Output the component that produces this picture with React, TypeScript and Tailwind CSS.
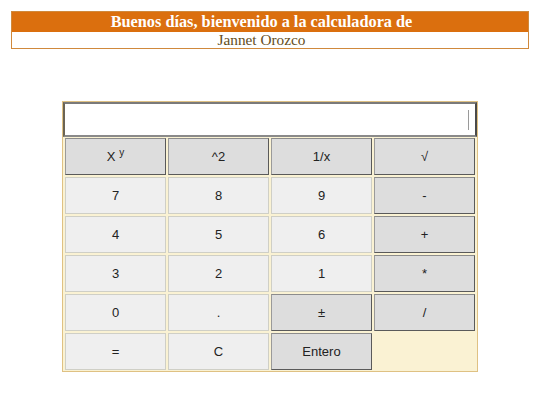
import React, { useState } from "react";

const keys = [
  { label: "xy", op: true },
  { label: "^2", op: true },
  { label: "1/x", op: true },
  { label: "√", op: true },
  { label: "7" },
  { label: "8" },
  { label: "9" },
  { label: "-", op: true },
  { label: "4" },
  { label: "5" },
  { label: "6" },
  { label: "+", op: true },
  { label: "3" },
  { label: "2" },
  { label: "1" },
  { label: "*", op: true },
  { label: "0" },
  { label: "." },
  { label: "±", op: true },
  { label: "/", op: true },
  { label: "=" },
  { label: "C" },
  { label: "Entero", op: true },
];

export default function App() {
  const [display, setDisplay] = useState("");

  const press = (k: string) => {
    if (k === "C") setDisplay("");
    else setDisplay(display + k);
  };

  return (
    <div className="w-[540px] h-[405px] bg-white pt-[11px] font-['Liberation_Sans',Arial,sans-serif]">
      <div className="mx-[11px] border border-[#d0893c] font-['Liberation_Serif','Times_New_Roman',serif] text-center">
        <div className="bg-[#db6f0e] text-white font-bold text-[16.3px] leading-[20px] h-[20px] pr-[17px]">
          Buenos días, bienvenido a la calculadora de
        </div>
        <div className="text-[#634d1c] text-[15.3px] leading-[16px] h-[16px] pr-[17px]">Jannet Orozco</div>
      </div>

      <div className="mx-auto mt-[52px] w-[416px] border border-[#dfc183] bg-[#faf2d3] pb-px">
        <div className="h-[35px] bg-white border-2 border-t-[#7a7a7a] border-l-[#6b6455] border-r-[#4a4a4a] border-b-[#8a8a8a] flex items-center justify-end pr-[6px] text-[16px] text-[#222]">
          <span className="mr-1">{display}</span>
          <span className="w-px h-[20px] bg-[#9a9a9a]" />
        </div>
        <div className="grid grid-cols-4 gap-[2px] px-[2px] pt-px">
          {keys.map((k) => (
            <button
              key={k.label}
              onClick={() => press(k.label)}
              className={
                "h-[37px] text-[13px] text-[#222] border " +
                (k.op
                  ? "bg-[#dddddd] border-[#5a5a5a] border-t-[#8c8c8c] border-l-[#9a9a9a]"
                  : "bg-[#efefef] border-[#cfcfc6]")
              }
            >
              {k.label === "xy" ? (
                <span>
                  X <sup className="text-[10px] -top-[5px]">y</sup>
                </span>
              ) : (
                k.label
              )}
            </button>
          ))}
        </div>
      </div>
    </div>
  );
}
